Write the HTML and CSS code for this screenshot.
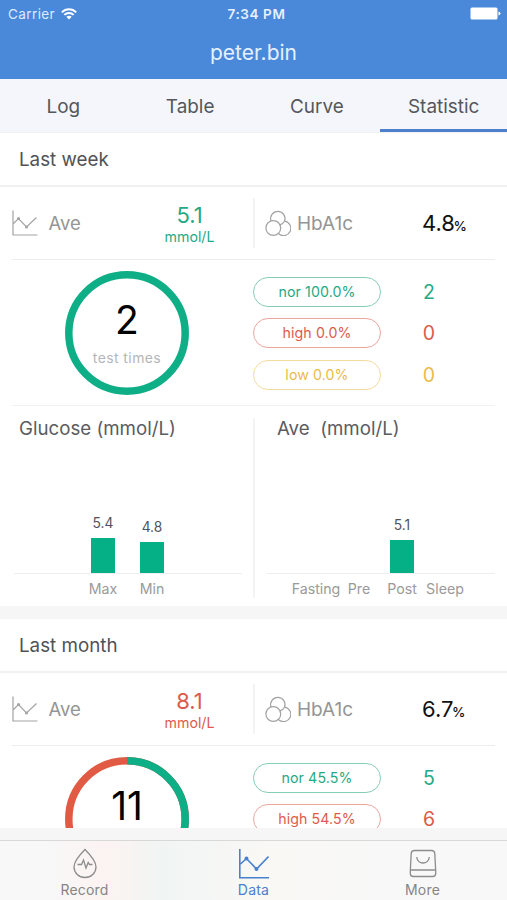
FILE: index.html
```html
<!DOCTYPE html>
<html lang="en">
<head>
    <meta charset="UTF-8">
    <meta name="viewport" content="width=device-width, initial-scale=1.0">
    <title>peter.bin</title>
    <link rel="stylesheet" href="styles.css">
</head>
<body>

    <!-- shared icons -->
    <svg class="sprite" width="0" height="0">
        <symbol id="icon-chart" viewBox="0 0 26 26">
            <path d="M1 .5V25H25.500M1.500 13.500L6.500 8.500L14.500 17L24.500 7.500"/>
            <circle cx="6.500" cy="8.500" r="1"/>
            <circle cx="14.500" cy="17" r="1"/>
        </symbol>
        <symbol id="icon-cells" viewBox="0 0 26 26">
            <circle cx="8.300" cy="18" r="7.400"/>
            <path d="M6 11A7.200 7.200 0 1 1 19.500 11.300Q18 14 15 14.800"/>
            <path d="M19.800 11.200A7.300 7.300 0 1 1 13.600 23.800"/>
        </symbol>
    </svg>

    <header class="header">
        <div class="status-bar">
            <div class="carrier">
                <span>Carrier</span>
                <svg width="16" height="12" viewBox="0 0 16 12" fill="none" stroke="#fff" stroke-width="1.900">
                    <path d="M.8 4.300C4.800 .2 11.200 .2 15.200 4.300M3.300 6.900C6 4.300 10 4.300 12.700 6.900"/>
                    <path d="M5.300 8.700C6.800 7.300 9.200 7.300 10.700 8.700L8 11.500Z" fill="#fff" stroke="none"/>
                </svg>
            </div>
            <div class="time">7:34 PM</div>
            <div class="battery">
                <svg width="31" height="13" viewBox="0 0 31 13" fill="#fff">
                    <rect x=".5" y=".5" width="27" height="12" rx="1.500"/>
                    <path d="M28.500 4.500Q30.500 5 30.500 6.500T28.500 8.500Z"/>
                </svg>
            </div>
        </div>
        <h1>peter.bin</h1>
    </header>

    <nav class="tabs">
        <a class="tab">Log</a>
        <a class="tab">Table</a>
        <a class="tab">Curve</a>
        <a class="tab active">Statistic</a>
    </nav>

    <main class="content">
        <section class="period">
            <h2>Last week</h2>
            <div class="summary">
                <div class="metric">
                    <svg class="icon"><use href="#icon-chart"/></svg>
                    <span class="name">Ave</span>
                    <div class="average green">
                        <strong>5.1</strong>
                        <span>mmol/L</span>
                    </div>
                </div>
                <div class="metric">
                    <svg class="icon"><use href="#icon-cells"/></svg>
                    <span class="name hba">HbA1c</span>
                    <div class="percent">4.8<small>%</small></div>
                </div>
            </div>

            <div class="tests">
                <div class="donut">
                    <svg width="124" height="124" viewBox="0 0 124 124">
                        <circle class="ring-green" cx="62" cy="62" r="58.200"/>
                    </svg>
                    <div class="donut-text">
                        <strong>2</strong>
                        <span>test times</span>
                    </div>
                </div>
                <div class="levels">
                    <div class="level green"><span class="pill">nor 100.0%</span><b>2</b></div>
                    <div class="level red"><span class="pill">high 0.0%</span><b>0</b></div>
                    <div class="level yellow"><span class="pill">low 0.0%</span><b>0</b></div>
                </div>
            </div>

            <div class="charts">
                <div class="chart">
                    <h3>Glucose (mmol/L)</h3>
                    <div class="bars wide">
                        <div class="col"><span>5.4</span><i style="height: 35px"></i></div>
                        <div class="col"><span>4.8</span><i style="height: 31px"></i></div>
                    </div>
                    <div class="labels wide">
                        <span>Max</span>
                        <span>Min</span>
                    </div>
                </div>
                <div class="chart">
                    <h3>Ave&nbsp; (mmol/L)</h3>
                    <div class="bars">
                        <div class="col"></div>
                        <div class="col"></div>
                        <div class="col"><span>5.1</span><i style="height: 33px"></i></div>
                        <div class="col"></div>
                    </div>
                    <div class="labels">
                        <span>Fasting</span>
                        <span>Pre</span>
                        <span>Post</span>
                        <span>Sleep</span>
                    </div>
                </div>
            </div>
        </section>

        <section class="period">
            <h2>Last month</h2>
            <div class="summary">
                <div class="metric">
                    <svg class="icon"><use href="#icon-chart"/></svg>
                    <span class="name">Ave</span>
                    <div class="average red">
                        <strong>8.1</strong>
                        <span>mmol/L</span>
                    </div>
                </div>
                <div class="metric">
                    <svg class="icon"><use href="#icon-cells"/></svg>
                    <span class="name hba">HbA1c</span>
                    <div class="percent">6.7<small>%</small></div>
                </div>
            </div>

            <div class="tests">
                <div class="donut">
                    <svg width="124" height="124" viewBox="0 0 124 124">
                        <circle class="ring-red" cx="62" cy="62" r="58.200"/>
                        <circle class="ring-green" cx="62" cy="62" r="58.200" pathLength="100" stroke-dasharray="45.500 54.500" transform="rotate(-90 62 62)"/>
                    </svg>
                    <div class="donut-text">
                        <strong>11</strong>
                    </div>
                </div>
                <div class="levels">
                    <div class="level green"><span class="pill">nor 45.5%</span><b>5</b></div>
                    <div class="level red"><span class="pill">high 54.5%</span><b>6</b></div>
                </div>
            </div>
        </section>
    </main>

    <footer class="tab-bar">
        <a class="item">
            <svg width="30" height="32" viewBox="0 0 30 32">
                <path d="M15 1.500C12 4.500 4 12.500 4 19A11 10.500 0 0 0 26 19C26 12.500 18 4.500 15 1.500Z"/>
                <path d="M7.500 16.500H11.500L13.500 12L16 20L18.200 14.500L19.500 16.500H22.500"/>
            </svg>
            <span>Record</span>
        </a>
        <a class="item active">
            <svg width="30" height="32" viewBox="0 0 30 32">
                <path d="M.8 1V29.800H30M1.500 16L7.500 10.500L17.500 21L29.500 8.500"/>
                <circle cx="7.500" cy="10.500" r="1.200"/>
                <circle cx="17.500" cy="21" r="1.200"/>
            </svg>
            <span>Data</span>
        </a>
        <a class="item">
            <svg width="30" height="32" viewBox="0 0 30 32">
                <path d="M6.500 2.500H23.500Q26.500 2.500 26.800 5.500L27.700 23V25.500Q27.700 28.500 24.700 28.500H5.300Q2.300 28.500 2.300 25.500V23L3.200 5.500Q3.500 2.500 6.500 2.500Z"/>
                <path d="M2.500 22H27.500M8.700 9C9.500 17 20.500 17 21.300 9"/>
            </svg>
            <span>More</span>
        </a>
    </footer>

</body>
</html>
```

FILE: styles.css
```css
* {
    box-sizing: border-box;
}

body {
    font-family: Inter, 'Liberation Sans', sans-serif;
    margin: 0;
    height: 900px;
    display: flex;
    flex-direction: column;
    background: #f6f6f6;
    color: #505257;
    overflow: hidden;
}

h1, h2, h3 {
    margin: 0;
    font-weight: 400;
}

.sprite {
    position: absolute;
}

/* Header */
.header {
    height: 79px;
    flex: none;
    background: #4a88da;
    color: #fff;
}

.status-bar {
    height: 27px;
    padding: 0 6px 0 8px;
    display: grid;
    grid-template-columns: 1fr auto 1fr;
    align-items: center;
    font-size: 13.5px;
}

.carrier {
    display: flex;
    align-items: center;
    gap: 6px;
    color: #dcebff;
    letter-spacing: 0.4px;
}

.time {
    padding-left: 4px;
    font-weight: 600;
    letter-spacing: 0.6px;
    color: #e6f1ff;
}

.battery {
    display: flex;
    justify-content: flex-end;
}

h1 {
    text-align: center;
    font-size: 21px;
    line-height: 51px;
    color: #e4f0ff;
}

/* Tabs */
.tabs {
    height: 54px;
    flex: none;
    display: flex;
    background: #f4f6fb;
    border-bottom: 1px solid #f0f1f3;
}

.tab {
    flex: 1;
    height: 53px;
    text-align: center;
    font-size: 18.9px;
    line-height: 56px;
    color: #55575b;
}

.tab.active {
    border-bottom: 3px solid #4c80cd;
}

/* Statistics */
.content {
    height: 695px;
    flex: none;
    overflow: hidden;
    display: flex;
    flex-direction: column;
    gap: 13px;
}

.period {
    height: 473px;
    flex: none;
    background: #fff;
}

h2 {
    height: 54px;
    padding-left: 19px;
    border-bottom: 2px solid #f1f1f1;
    font-size: 18.8px;
    line-height: 54px;
    color: #505257;
}

.summary {
    height: 73px;
    margin: 0 12px;
    display: grid;
    grid-template-columns: 241px 1fr;
    align-items: center;
    border-bottom: 1px solid #ededed;
}

.metric {
    height: 50px;
    display: flex;
    align-items: center;
}

.metric + .metric {
    border-left: 2px solid #f3f3f3;
    padding-left: 10px;
}

.icon {
    width: 26px;
    height: 26px;
    fill: none;
    stroke: #a3a3a3;
    stroke-width: 1.2;
}

.name {
    width: 100px;
    margin-left: 10.5px;
    font-size: 18.5px;
    color: #959595;
}

.name.hba {
    margin-left: 6px;
    width: 125px;
    font-size: 19px;
}

.average {
    width: 82px;
    padding-top: 2px;
    display: flex;
    flex-direction: column;
    align-items: center;
    font-size: 14.2px;
    line-height: 18px;
}

.average strong {
    font-size: 22px;
    font-weight: 400;
    line-height: 26px;
}

.percent {
    font-size: 22px;
    color: #111;
}

.percent small {
    font-size: 13.5px;
    font-weight: 500;
    margin-left: -1.5px;
}

.green { color: #25a985; }
.red { color: #dc5b4c; }
.yellow { color: #eabb4a; }

.tests {
    height: 146px;
    margin: 0 12px;
    display: flex;
    border-bottom: 1px solid #f1f1f1;
}

.donut {
    width: 124px;
    height: 124px;
    margin: 11px 64px 0 53px;
    display: grid;
}

.donut svg,
.donut-text {
    grid-area: 1 / 1;
}

.donut circle {
    fill: none;
    stroke-width: 7.5;
}

.ring-green { stroke: #0eae86; }
.ring-red { stroke: #e15a43; }

.donut-text {
    padding-top: 25px;
    text-align: center;
    font-size: 14px;
    letter-spacing: 0.4px;
    color: #b5b6ba;
}

.donut-text strong {
    display: block;
    margin-bottom: 5px;
    font-size: 39px;
    font-weight: 400;
    line-height: 48px;
    letter-spacing: 0;
    color: #000;
}

.levels {
    padding-top: 16.5px;
    display: flex;
    flex-direction: column;
    gap: 11.5px;
}

.level {
    height: 30px;
    display: flex;
    align-items: center;
}

.pill {
    width: 128px;
    height: 30px;
    border: 1px solid;
    border-radius: 15px;
    text-align: center;
    font-size: 14.2px;
    line-height: 28px;
    letter-spacing: 0.1px;
}

.green .pill { border-color: #86cdb9; }
.red .pill { border-color: #eda69e; }
.yellow .pill { border-color: #f3db9d; }

.level b {
    width: 24px;
    margin-left: 36px;
    text-align: center;
    font-size: 19.5px;
    font-weight: 400;
}

/* Bar charts */
.charts {
    padding: 12px 12px 0;
    display: grid;
    grid-template-columns: 241px 1fr;
}

.chart {
    height: 180px;
    padding: 0 11px 0 2px;
}

.chart + .chart {
    border-left: 2px solid #f3f3f3;
    padding: 0 0 0 12px;
}

h3 {
    height: 20px;
    padding-left: 5px;
    font-size: 18.7px;
    line-height: 22px;
    color: #5a5b5f;
}

.chart + .chart h3 {
    padding-left: 10px;
}

.bars {
    height: 136px;
    padding-right: 1px;
    display: flex;
    justify-content: center;
    align-items: flex-end;
    border-bottom: 1px solid #eee;
}

.col {
    width: 43px;
    display: flex;
    flex-direction: column;
    align-items: center;
    font-size: 13.8px;
}

.col span {
    margin-bottom: 6px;
    line-height: 17px;
}

.col i {
    width: 24.5px;
    background: #05b087;
}

.labels {
    padding-right: 1px;
    display: flex;
    justify-content: center;
    font-size: 14.2px;
    line-height: 30px;
    color: #9a9a9a;
}

.labels span {
    width: 43px;
    display: flex;
    justify-content: center;
}

.wide .col,
.labels.wide span {
    width: 49px;
}

/* Bottom tab bar */
.tab-bar {
    height: 60px;
    margin-top: auto;
    display: flex;
    border-top: 1px solid #d8d8d8;
    background: linear-gradient(90deg, #f8f8f8 10%, #fbf3f1 20%, #f8f4f2 25%, #f0f5f4 32%, #f4f6f5 40%, #f9f8f4 52%, #f8f8f8 75%);
}

.item {
    flex: 1;
    display: flex;
    flex-direction: column;
    align-items: center;
    padding-top: 7px;
    font-size: 14px;
    line-height: 20px;
    letter-spacing: 0.2px;
    color: #858585;
}

.item svg {
    fill: none;
    stroke: #8c8c8c;
    stroke-width: 1.3;
}

.item.active {
    color: #4a80d0;
}

.item.active svg {
    stroke: #4a80d0;
    stroke-width: 1.6;
}
```
